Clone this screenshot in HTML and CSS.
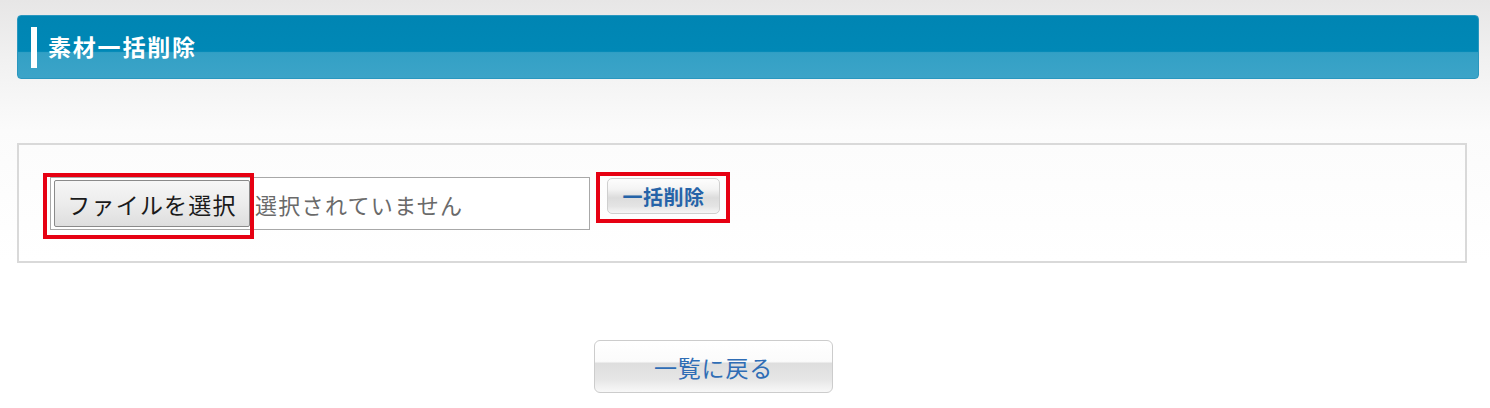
FILE: index.html
```html
<!DOCTYPE html>
<html lang="ja">
<head>
<meta charset="utf-8">
<link rel="stylesheet" href="styles.css">
</head>
<body>
<div class="page">
  <div class="header">
    <span class="header-bar"></span>
    <h1 class="header-title">素材一括削除</h1>
  </div>
  <div class="panel">
    <div class="file-field">
      <span class="file-btn">ファイルを選択</span>
      <span class="file-name">選択されていません</span>
      <span class="mark mark-file"></span>
    </div>
    <div class="del-wrap">
      <span class="del-btn">一括削除</span>
      <span class="mark mark-del"></span>
    </div>
  </div>
  <div class="back-row">
    <span class="back-btn">一覧に戻る</span>
  </div>
</div>
</body>
</html>
```

FILE: styles.css
```css
html, body {
  margin: 0;
  padding: 0;
}
body {
  width: 1490px;
  height: 408px;
  overflow: hidden;
  background: linear-gradient(#e7e6e6 0px, #f1f1f1 60px, #fbfbfb 130px, #ffffff 260px);
  font-family: "Noto Sans CJK JP", "Noto Sans", sans-serif;
}
.page {
  padding: 15px 11px 0 17px;
}
.header {
  height: 64px;
  border-radius: 4px;
  box-sizing: border-box;
  border: 1px solid #2a97bf;
  background: linear-gradient(#0085b3 0%, #0088b6 57%, #33a0c5 59%, #3ca4c8 100%);
  display: flex;
  align-items: center;
  padding-left: 13px;
}
.header-bar {
  width: 6px;
  height: 41px;
  background: #ffffff;
  margin-right: 11px;
}
.header-title {
  margin: 0;
  color: #ffffff;
  font-size: 23px;
  font-weight: bold;
  letter-spacing: 1.8px;
  line-height: 1;
  margin-top: -2px;
}
.panel {
  margin-top: 64px;
  width: 1450px;
  height: 120px;
  box-sizing: border-box;
  border: 2px solid #d9d9d9;
  background: linear-gradient(#fcfcfc, #ffffff);
  display: flex;
  align-items: flex-start;
  padding: 32px 0 0 31px;
}
.file-field {
  position: relative;
  width: 540px;
  height: 53px;
  box-sizing: border-box;
  border: 1px solid #a8a8a8;
  background: #ffffff;
  display: flex;
  align-items: center;
  padding-left: 3px;
}
.file-btn {
  width: 196px;
  height: 47px;
  box-sizing: border-box;
  border: 1px solid #8a8a8a;
  border-radius: 2px;
  background: linear-gradient(#f6f6f6 0%, #ececec 50%, #dedede 100%);
  display: flex;
  align-items: center;
  justify-content: center;
  font-size: 23px;
  letter-spacing: 1.2px;
  color: #1a1a1a;
}
.file-name {
  margin-left: 5px;
  font-size: 22px;
  letter-spacing: 1.3px;
  color: #6a6a6a;
}
.mark {
  position: absolute;
  border: 4px solid #e60012;
  box-sizing: border-box;
  pointer-events: none;
}
.mark-file {
  left: -8px;
  top: -5px;
  width: 211px;
  height: 66px;
}
.del-wrap {
  position: relative;
  margin-left: 17px;
  margin-top: 1px;
}
.del-btn {
  display: flex;
  align-items: center;
  justify-content: center;
  width: 113px;
  height: 36px;
  box-sizing: border-box;
  border: 1px solid #cfcfcf;
  border-radius: 5px;
  background: linear-gradient(#fdfdfd 0%, #f4f4f4 30%, #dcdcdc 55%, #e4e4e4 80%, #f6f6f6 100%);
  color: #2563a8;
  font-size: 20px;
  font-weight: bold;
  letter-spacing: 0.5px;
}
.mark-del {
  left: -11px;
  top: -6px;
  width: 134px;
  height: 51px;
}
.back-row {
  display: flex;
  padding-left: 577px;
  margin-top: 77px;
}
.back-btn {
  display: flex;
  align-items: center;
  justify-content: center;
  width: 239px;
  height: 53px;
  box-sizing: border-box;
  border: 1px solid #cccccc;
  border-radius: 6px;
  background: linear-gradient(#ffffff 0%, #fbfbfb 40%, #dedede 44%, #e6e6e6 75%, #f8f8f8 100%);
  color: #2f6db5;
  font-size: 23px;
  font-weight: normal;
  letter-spacing: 0.8px;
}
```
